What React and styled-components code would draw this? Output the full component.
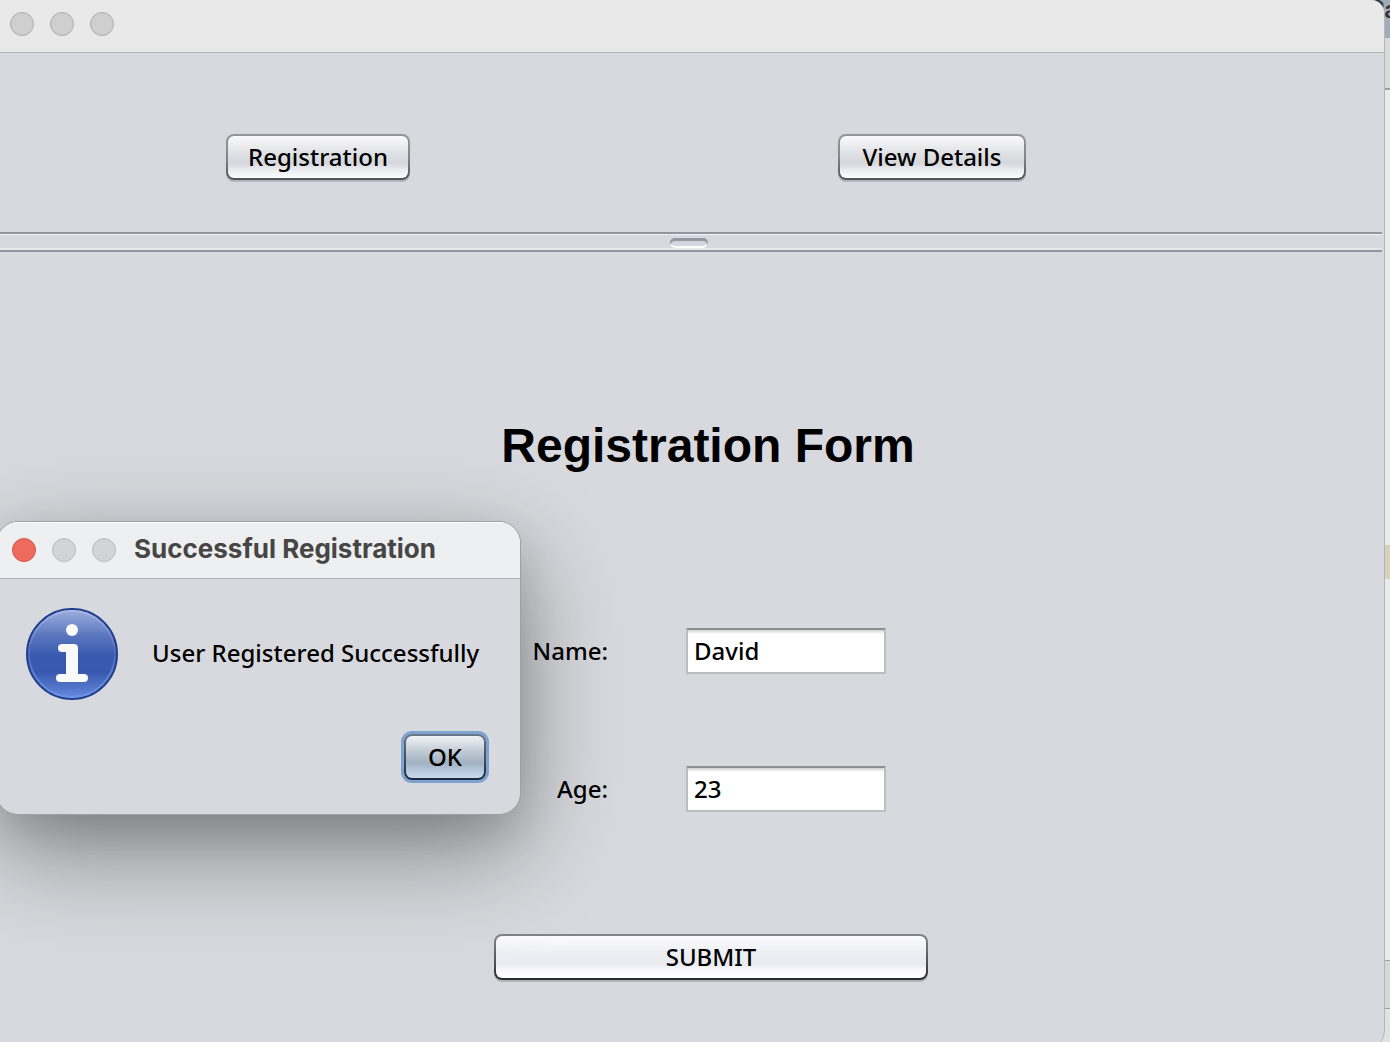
import React, { useState } from "react";
import styled, { createGlobalStyle, css } from "styled-components";

const GlobalStyle = createGlobalStyle`
  * { box-sizing: border-box; }
  body {
    margin: 0;
    background: #e8e8e8;
    color: #000;
    font-family: "Noto Sans", "Open Sans", sans-serif;
    font-size: 24px;
    font-weight: 500;
    line-height: 32px;
  }
`;

const Desktop = styled.div`
  position: relative;
  display: flex;
  height: 100vh;
  overflow: hidden;
`;

const Window = styled.main`
  flex: 1;
  z-index: 1;
  display: flex;
  flex-direction: column;
  min-height: calc(100vh + 8px);
  background: #d8d9de;
  border-radius: 0 14px 20px 0;
  border-right: 1px solid #b4b5b9;
  overflow: hidden;
`;

const Backdrop = styled.aside`
  display: flex;
  flex-direction: column;
  width: 25px;
  margin-left: -20px;
  overflow: hidden;
  font-family: Inter, "Liberation Sans", sans-serif;
  font-weight: 600;
  line-height: 20px;
  color: #333;
`;

const Band = styled.div`
  flex: ${(p) => (p.$fill ? `${p.$fill} 1 0` : "none")};
  height: ${(p) => (p.$fill ? "auto" : `${p.$h}px`)};
  background: ${(p) => p.$color};
  border-bottom: ${(p) => (p.$line ? `${p.$line}px solid #a0a0a0` : "none")};
  white-space: nowrap;
  padding-left: 4px;
`;

const TitleBar = styled.header`
  display: flex;
  align-items: center;
  gap: 16px;
  ${(p) =>
    p.$dialog
      ? css`
          height: 57px;
          padding-left: 15px;
          background: #eeeff1;
          border-bottom: 1px solid #adafb8;
          box-shadow: inset 0 1px #fff;
        `
      : css`
          height: 53px;
          padding: 0 10px 4px;
          background: #e9e9e9;
          border-bottom: 1px solid #b0b1b7;
        `}
`;

const Light = styled.button`
  width: 24px;
  height: 24px;
  padding: 0;
  border-radius: 50%;
  border: 1px solid ${(p) => (p.$close ? "#d9534a" : p.$dim ? "#b9babb" : "#adadad")};
  background: ${(p) => (p.$close ? "#ed6a5e" : p.$dim ? "#d3d4d5" : "#cfcfcf")};
`;

const DialogTitle = styled.h2`
  margin: 0;
  padding: 0 0 2px 2px;
  font-family: Inter, "Liberation Sans", sans-serif;
  font-size: 26px;
  font-weight: 700;
  color: #464646;
`;

const Button = styled.button`
  height: 46px;
  width: ${(p) => p.$width || "auto"};
  padding: 0;
  border: 2px solid transparent;
  border-radius: 8px;
  font: inherit;
  line-height: 40px;
  color: #000;
  background:
    linear-gradient(#fafafb, #e2e3e7 38%, #d6d7dc 64%, #e9ebf0 80%, #fcfdff) padding-box,
    linear-gradient(#92969c, #84878d 50%, #505258) border-box;
  box-shadow: 0 2px #b4b5ba;
  ${(p) =>
    p.$submit &&
    css`
      background:
        linear-gradient(#fcfcfe, #eeeff4 40%, #e8eaef 66%, #f8f8fb 80%, #fff) padding-box,
        linear-gradient(#85868d, #5c5e66 50%, #26282f) border-box;
    `}
  ${(p) =>
    p.$primary &&
    css`
      background:
        linear-gradient(#f0f3f6, #c3ccd6 35%, #a3b1c2 64%, #b3c4d9 80%, #cadaee) padding-box,
        linear-gradient(#6a7788, #445266 50%, #1b293c) border-box;
      box-shadow: 0 0 0 3px #7da3d1;
    `}
`;

const Toolbar = styled.nav`
  display: flex;
  justify-content: center;
  gap: 428px;
  padding: 81px 132px 52px 0;
`;

const Divider = styled.div`
  display: flex;
  justify-content: center;
  align-items: flex-end;
  height: 20px;
  margin-right: 2px;
  padding: 0 4px 2px 0;
  border: solid #9295a0;
  border-width: 2px 0;
  box-shadow: inset 0 1px #f1f2f5, inset 0 -2px #e6e7ec;
`;

const Grip = styled.span`
  width: 38px;
  height: 10px;
  border-radius: 5px;
  background: #d3d7e0;
  box-shadow: inset 0 3px 1px #9297a1, inset 0 -2px #fff, inset 1px 0 #a9adb7, inset -1px 0 #a9adb7;
`;

const Form = styled.form`
  display: flex;
  flex-direction: column;
  align-items: center;
  padding: 164px 0 62px 38px;
`;

const Heading = styled.h1`
  margin: 0 0 152px;
  padding-right: 6px;
  font-family: "Liberation Sans", Arial, sans-serif;
  font-size: 48px;
  line-height: 60px;
`;

const Fields = styled.div`
  display: grid;
  grid-template-columns: 114px 200px;
  gap: 92px 78px;
  align-items: center;
  padding-right: 42px;
  margin-bottom: 122px;
`;

const Label = styled.label`
  text-align: right;
`;

const Input = styled.input`
  width: 100%;
  height: 46px;
  padding: 0 6px 2px;
  border: 2px solid #bcbdbf;
  border-top-color: #8d8e90;
  border-radius: 0;
  outline: none;
  background: linear-gradient(#d0d0d0, #fff 4px);
  font: inherit;
  color: #000;
`;

const Dialog = styled.section`
  position: absolute;
  z-index: 2;
  top: 521px;
  left: -4px;
  width: 525px;
  border: 1px solid #9fa0a4;
  border-radius: 22px;
  overflow: hidden;
  background: #d8d9de;
  box-shadow: 0 36px 100px rgba(0, 0, 0, 0.4), 0 16px 40px rgba(0, 0, 0, 0.1);
`;

const Message = styled.div`
  display: flex;
  align-items: center;
  gap: 34px;
  padding: 29px 29px 34px;
  p { margin: 0; padding-bottom: 2px; white-space: nowrap; }
`;

const Actions = styled.div`
  display: flex;
  justify-content: flex-end;
  padding: 0 34px 34px 0;
`;

const InfoIcon = () => (
  <svg width="92" height="92" viewBox="0 0 92 92" aria-hidden="true">
    <defs>
      <linearGradient id="infoFill" x1="0" y1="0" x2="0" y2="1">
        <stop offset="0" stopColor="#9fb0df" />
        <stop offset="0.3" stopColor="#5976bd" />
        <stop offset="0.5" stopColor="#3b5bb0" />
        <stop offset="0.7" stopColor="#3858ad" />
        <stop offset="1" stopColor="#668be0" />
      </linearGradient>
      <linearGradient id="infoGlow" x1="0" y1="0" x2="0" y2="1">
        <stop offset="0" stopColor="#a9b8e3" />
        <stop offset="0.5" stopColor="#4a68b8" />
        <stop offset="1" stopColor="#7093e6" />
      </linearGradient>
    </defs>
    <circle cx="46" cy="46" r="45" fill="url(#infoFill)" stroke="#213f8d" strokeWidth="2" />
    <circle cx="46" cy="46" r="43" fill="none" stroke="url(#infoGlow)" strokeWidth="2" />
    <circle cx="46" cy="22" r="6" fill="#fafafa" />
    <path
      d="M36 36H48Q52 36 52 40V66H58Q62 66 62 70T58 74H34Q30 74 30 70T34 66H40V44H36Q32 44 32 40T36 36Z"
      fill="#fafafa"
    />
  </svg>
);

export default function App() {
  const [name, setName] = useState("David");
  const [age, setAge] = useState("23");

  return (
    <>
      <GlobalStyle />
      <Desktop>
        <Window>
          <TitleBar>
            <Light aria-label="Close window" />
            <Light aria-label="Minimize window" />
            <Light aria-label="Zoom window" />
          </TitleBar>
          <Toolbar>
            <Button type="button" $width="184px">Registration</Button>
            <Button type="button" $width="188px">View Details</Button>
          </Toolbar>
          <Divider>
            <Grip />
          </Divider>
          <Form onSubmit={(e) => e.preventDefault()}>
            <Heading>Registration Form</Heading>
            <Fields>
              <Label htmlFor="name">Name:</Label>
              <Input id="name" value={name} onChange={(e) => setName(e.target.value)} />
              <Label htmlFor="age">Age:</Label>
              <Input id="age" value={age} onChange={(e) => setAge(e.target.value)} />
            </Fields>
            <Button type="submit" $submit $width="434px">SUBMIT</Button>
          </Form>
        </Window>
        <Backdrop>
          <Band $h={38} $color="#a3abb5">Pa</Band>
          <Band $h={52} $color="#dbdbdb" $line={2} />
          <Band $fill={456} $color="#ebebeb" />
          <Band $h={34} $color="#d6d2bb" />
          <Band $fill={381} $color="#ebebeb" $line={1} />
          <Band $h={48} $color="#d8d8d8" $line={1} />
          <Band $h={33} $color="#e2e2e2" />
        </Backdrop>
        <Dialog role="dialog" aria-labelledby="dialog-title">
          <TitleBar $dialog>
            <Light $close aria-label="Close dialog" />
            <Light $dim aria-label="Minimize dialog" />
            <Light $dim aria-label="Zoom dialog" />
            <DialogTitle id="dialog-title">Successful Registration</DialogTitle>
          </TitleBar>
          <Message>
            <InfoIcon />
            <p>User Registered Successfully</p>
          </Message>
          <Actions>
            <Button type="button" $primary $width="82px">OK</Button>
          </Actions>
        </Dialog>
      </Desktop>
    </>
  );
}
